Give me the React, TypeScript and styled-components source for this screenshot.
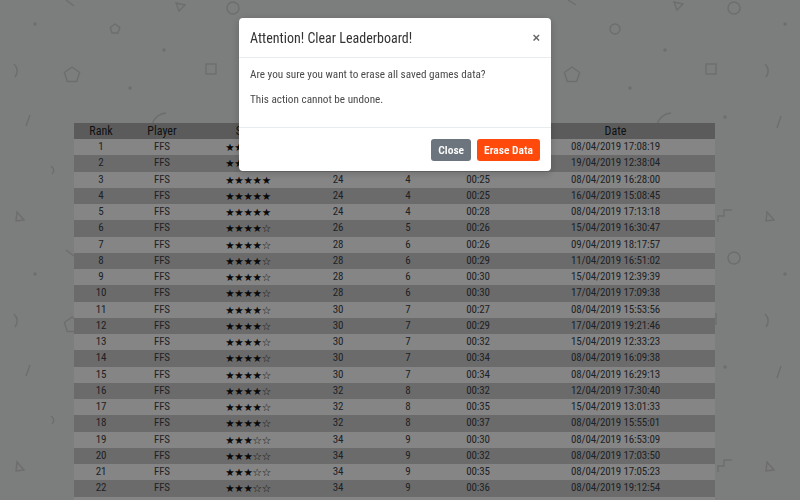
import styled, { createGlobalStyle } from 'styled-components';

type Score = {
  rank: number;
  stars: number;
  moves: number;
  misses: number;
  time: string;
  date: string;
};

const scores: Score[] = [
  { rank: 1, stars: 5, moves: 24, misses: 4, time: '00:22', date: '08/04/2019 17:08:19' },
  { rank: 2, stars: 5, moves: 24, misses: 4, time: '00:24', date: '19/04/2019 12:38:04' },
  { rank: 3, stars: 5, moves: 24, misses: 4, time: '00:25', date: '08/04/2019 16:28:00' },
  { rank: 4, stars: 5, moves: 24, misses: 4, time: '00:25', date: '16/04/2019 15:08:45' },
  { rank: 5, stars: 5, moves: 24, misses: 4, time: '00:28', date: '08/04/2019 17:13:18' },
  { rank: 6, stars: 4, moves: 26, misses: 5, time: '00:26', date: '15/04/2019 16:30:47' },
  { rank: 7, stars: 4, moves: 28, misses: 6, time: '00:26', date: '09/04/2019 18:17:57' },
  { rank: 8, stars: 4, moves: 28, misses: 6, time: '00:29', date: '11/04/2019 16:51:02' },
  { rank: 9, stars: 4, moves: 28, misses: 6, time: '00:30', date: '15/04/2019 12:39:39' },
  { rank: 10, stars: 4, moves: 28, misses: 6, time: '00:30', date: '17/04/2019 17:09:38' },
  { rank: 11, stars: 4, moves: 30, misses: 7, time: '00:27', date: '08/04/2019 15:53:56' },
  { rank: 12, stars: 4, moves: 30, misses: 7, time: '00:29', date: '17/04/2019 19:21:46' },
  { rank: 13, stars: 4, moves: 30, misses: 7, time: '00:32', date: '15/04/2019 12:33:23' },
  { rank: 14, stars: 4, moves: 30, misses: 7, time: '00:34', date: '08/04/2019 16:09:38' },
  { rank: 15, stars: 4, moves: 30, misses: 7, time: '00:34', date: '08/04/2019 16:29:13' },
  { rank: 16, stars: 4, moves: 32, misses: 8, time: '00:32', date: '12/04/2019 17:30:40' },
  { rank: 17, stars: 4, moves: 32, misses: 8, time: '00:35', date: '15/04/2019 13:01:33' },
  { rank: 18, stars: 4, moves: 32, misses: 8, time: '00:37', date: '08/04/2019 15:55:01' },
  { rank: 19, stars: 3, moves: 34, misses: 9, time: '00:30', date: '08/04/2019 16:53:09' },
  { rank: 20, stars: 3, moves: 34, misses: 9, time: '00:32', date: '08/04/2019 17:03:50' },
  { rank: 21, stars: 3, moves: 34, misses: 9, time: '00:35', date: '08/04/2019 17:05:23' },
  { rank: 22, stars: 3, moves: 34, misses: 9, time: '00:36', date: '08/04/2019 19:12:54' },
];

const columns = [
  { label: 'Rank', width: 54 },
  { label: 'Player', width: 68 },
  { label: 'Stars', width: 104 },
  { label: 'Moves', width: 76 },
  { label: 'Misses', width: 64 },
  { label: 'Time', width: 76 },
  { label: 'Date', width: 199 },
];

const pentagon = (cx: number, cy: number, r: number) =>
  Array.from({ length: 5 }, (_, i) => {
    const a = -Math.PI / 2 + (i * 2 * Math.PI) / 5;
    return `${(cx + r * Math.cos(a)).toFixed(1)},${(cy + r * Math.sin(a)).toFixed(1)}`;
  }).join(' ');

// faint floating shapes behind the page, one 250px band repeated twice
const ShapesBand = () => (
  <g id="band">
    <line x1="66" y1="0" x2="74" y2="6" />
    <polygon points="176,3 185,5 179,11" />
    <circle cx="233" cy="8" r="6" />
    <circle cx="35" cy="24" r="1" className="dot" />
    <polygon points={pentagon(115, 29, 5)} />
    <circle cx="164" cy="50" r="1" className="dot" />
    <polygon points={pentagon(72, 75, 8)} />
    <rect x="206" y="64" width="10" height="10" />
    <path d="M14 64 Q20 70 15 77" />
    <circle cx="130" cy="88" r="1" className="dot" />
    <line x1="30" y1="115" x2="26" y2="126" />
    <path d="M152 124 Q156 114 166 113" />
    <path d="M51 166 Q56 170 52 174" />
    <polygon points="17,212 24,220 16,221" />

    <line x1="568" y1="0" x2="576" y2="5" />
    <polygon points="674,2 683,4 677,10" />
    <circle cx="734" cy="8" r="6" />
    <circle cx="615" cy="29" r="5" />
    <circle cx="785" cy="24" r="1" className="dot" />
    <circle cx="665" cy="50" r="1" className="dot" />
    <polygon points={pentagon(572, 75, 8)} />
    <rect x="706" y="64" width="10" height="10" />
    <path d="M765 64 Q771 70 766 77" />
    <circle cx="630" cy="88" r="1" className="dot" />
    <path d="M657 124 Q661 114 671 113" />
    <circle cx="725" cy="117" r="1" className="dot" />
    <line x1="781" y1="116" x2="777" y2="128" />
    <path d="M718 222 L718 216 L724 216 L724 210 L732 210" />
    <polygon points="767,212 774,220 766,221" />
  </g>
);

const Leaderboard = () => (
  <Table>
    <thead>
      <tr>
        {columns.map((c) => (
          <HeadCell key={c.label} $width={c.width}>
            {c.label}
          </HeadCell>
        ))}
      </tr>
    </thead>
    <tbody>
      {scores.map((s) => (
        <Row key={s.rank}>
          <Cell>{s.rank}</Cell>
          <Cell>FFS</Cell>
          <Cell>
            <Stars>{'★'.repeat(s.stars) + '☆'.repeat(5 - s.stars)}</Stars>
          </Cell>
          <Cell>{s.moves}</Cell>
          <Cell>{s.misses}</Cell>
          <Cell>{s.time}</Cell>
          <Cell>{s.date}</Cell>
        </Row>
      ))}
      <Row>
        <Cell colSpan={7} />
      </Row>
    </tbody>
  </Table>
);

const App = () => {
  return (
    <>
      <GlobalStyle />
      <Page>
        <Backdrop aria-hidden>
          <svg width="800" height="500">
            <ShapesBand />
            <use href="#band" y="250" />
          </svg>
        </Backdrop>
        <Content>
          <Leaderboard />
        </Content>
      </Page>

      <Overlay />
      <DialogWrap>
        <Dialog role="dialog">
          <DialogHeader>
            <DialogTitle>Attention! Clear Leaderboard!</DialogTitle>
            <CloseX>×</CloseX>
          </DialogHeader>
          <DialogBody>
            <p>Are you sure you want to erase all saved games data?</p>
            <p>This action cannot be undone.</p>
          </DialogBody>
          <DialogFooter>
            <Button $variant="secondary">Close</Button>
            <Button $variant="danger">Erase Data</Button>
          </DialogFooter>
        </Dialog>
      </DialogWrap>
    </>
  );
};

export default App;

const GlobalStyle = createGlobalStyle`
  html, body {
    margin: 0;
    height: 100%;
    overflow: hidden;
  }
  body {
    background: #e2e3e3;
    font-family: "Liberation Sans Narrow", "Roboto Condensed", "Liberation Sans", sans-serif;
    color: #333;
  }
`;

const Page = styled.div`
  position: relative;
  height: 100vh;
  overflow: hidden;
`;

const Backdrop = styled.div`
  position: absolute;
  inset: 0;
  overflow: hidden;

  svg {
    display: block;
    fill: none;
    stroke: #c6c7c7;
    stroke-width: 1.4;
  }

  .dot {
    fill: #c6c7c7;
  }
`;

const Content = styled.main`
  position: relative;
  padding: 123px 0 0 74px;
`;

const Table = styled.table`
  width: 641px;
  border-collapse: collapse;
  table-layout: fixed;
  font-size: 11px;
  letter-spacing: -0.15px;
  text-align: center;
`;

const HeadCell = styled.th<{ $width: number }>`
  width: ${(p) => p.$width}px;
  height: 16px;
  padding: 0;
  background: #a6a6a6;
  color: #1e1e1e;
  font-weight: 400;
  font-size: 12px;
  letter-spacing: 0;
  line-height: 14px;
`;

const Row = styled.tr`
  height: 16.25px;
  background: #f2f2f2;

  &:nth-child(even) {
    background: #c4c4c4;
  }
`;

const Cell = styled.td`
  height: 16.25px;
  padding: 0;
  line-height: 12px;
  vertical-align: middle;
  color: #3a3d44;
  white-space: nowrap;
`;

const Stars = styled.span`
  display: inline-block;
  vertical-align: middle;
  font-family: "DejaVu Sans", sans-serif;
  font-size: 10.5px;
  line-height: 10px;
  color: #111;
  letter-spacing: -0.3px;
`;

const Overlay = styled.div`
  position: fixed;
  inset: 0;
  background: rgba(0, 0, 0, 0.45);
`;

const DialogWrap = styled.div`
  position: fixed;
  inset: 0;
  padding: 18px 0 0 239px;
`;

const Dialog = styled.div`
  width: 312px;
  background: #fff;
  border-radius: 4px;
  box-shadow: 0 2px 8px rgba(0, 0, 0, 0.2);
  overflow: hidden;
`;

const DialogHeader = styled.header`
  height: 39px;
  padding: 0 11px 0 11px;
  display: flex;
  align-items: center;
  justify-content: space-between;
  border-bottom: 1px solid #e9ecef;
`;

const DialogTitle = styled.h5`
  margin: 0;
  font-size: 14px;
  font-weight: 400;
  color: #333;
`;

const CloseX = styled.button`
  border: 0;
  background: none;
  padding: 0;
  font-family: "Liberation Sans", sans-serif;
  font-size: 13px;
  font-weight: 700;
  color: #666;
  line-height: 1;
  cursor: pointer;
`;

const DialogBody = styled.div`
  padding: 9px 11px 1px;
  font-size: 11.2px;
  line-height: 16px;
  color: #4a4a4a;

  p {
    margin: 0 0 9px;
  }

  p:last-child {
    margin-bottom: 18px;
  }
`;

const DialogFooter = styled.footer`
  display: flex;
  justify-content: flex-end;
  gap: 6px;
  padding: 11px 11px 10px;
  border-top: 1px solid #e9ecef;
`;

const Button = styled.button<{ $variant: 'secondary' | 'danger' }>`
  height: 22px;
  padding: 0 7px;
  border: 0;
  border-radius: 3px;
  background: ${(p) => (p.$variant === 'danger' ? '#ff4a0c' : '#6c757d')};
  color: #fff;
  font-family: inherit;
  font-size: 11.5px;
  font-weight: 600;
  cursor: pointer;
`;
